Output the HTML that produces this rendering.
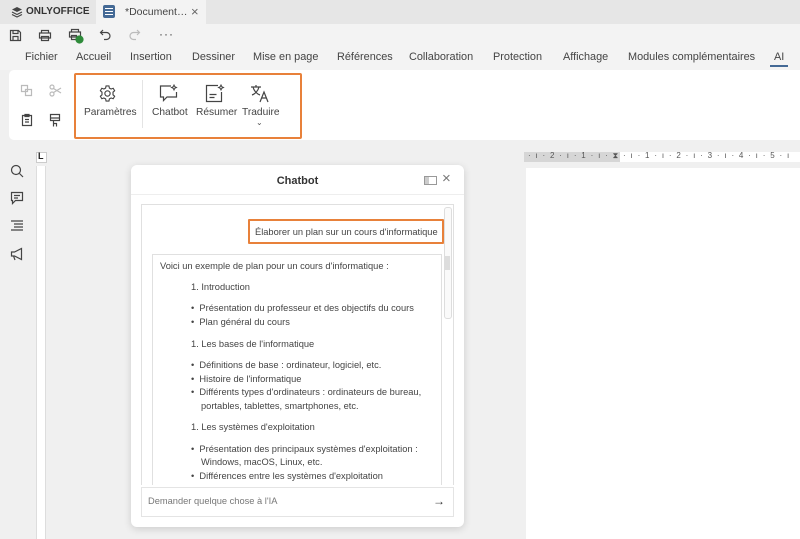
<!DOCTYPE html>
<html><head><meta charset="utf-8"><style>
*{margin:0;padding:0;box-sizing:border-box}
body{width:800px;height:539px;overflow:hidden;background:#f0f0f0;font-family:"Liberation Sans",Arial,sans-serif;position:relative;color:#333}
.a{position:absolute}
.t{position:absolute;white-space:nowrap}
svg{position:absolute;fill:none;stroke:#444;stroke-width:1.2}
.menu{font-size:10.9px;color:#444;top:51px}
.rl{font-size:10.2px;color:#444;top:107px}
.c{font-size:9.3px;color:#444;white-space:nowrap;position:absolute}
</style></head><body>
<div class="a" style="left:0;top:0;width:800px;height:24px;background:#e6e6e6"></div>
<div class="a" style="left:96px;top:0;width:110px;height:24px;background:#f3f3f3"></div>
<svg style="left:11px;top:6px" width="12" height="12" viewBox="0 0 12 12"><path d="M6 1L11 3.5 6 6 1 3.5Z" fill="#444" stroke="none"/><path d="M1 6L6 8.5 11 6M1 8.5L6 11 11 8.5" stroke="#444"/></svg>
<div class="t" style="left:26px;top:6px;font-size:10px;font-weight:bold;color:#333">ONLYOFFICE</div>
<div class="a" style="left:103px;top:5px;width:12px;height:13px;background:#446995;border-radius:2px"></div>
<div class="a" style="left:105px;top:8px;width:8px;height:1px;background:#fff;box-shadow:0 3px 0 #fff,0 6px 0 #fff"></div>
<div class="t" style="left:125px;top:6px;font-size:10.5px;color:#444">*Document…</div>
<div class="t" style="left:191px;top:4px;font-size:13px;color:#666">×</div>
<div class="a" style="left:0;top:24px;width:800px;height:46px;background:#f3f3f3"></div>
<svg style="left:9px;top:29px" width="13" height="13" viewBox="0 0 13 13"><path d="M1.5 1.5h8l2 2v8h-10z M4 1.5v3h5v-3 M4 11.5v-4h5v4"/></svg>
<svg style="left:38px;top:29px" width="14" height="13" viewBox="0 0 14 13"><path d="M3.5 4V1.5h7V4 M1.5 4h11v5h-11z M3.5 7.5h7v4h-7z"/></svg>
<svg style="left:68px;top:28px" width="16" height="16" viewBox="0 0 16 16"><path d="M3.5 4V1.5h7V4 M1.5 4h11v5h-11z M3.5 7.5h5v4h-5z"/><circle cx="11.5" cy="11.5" r="3.5" fill="#2e8b3a" stroke="#2e8b3a"/></svg>
<svg style="left:99px;top:29px" width="13" height="12" viewBox="0 0 13 12"><path d="M4 1L1.5 3.5 4 6 M1.5 3.5h6a3.5 3.5 0 010 7H5"/></svg>
<svg style="left:128px;top:29px;stroke:#bbb" width="13" height="12" viewBox="0 0 13 12"><path d="M9 1l2.5 2.5L9 6 M11.5 3.5h-6a3.5 3.5 0 000 7H8"/></svg>
<div class="t" style="left:159px;top:27px;font-size:12px;color:#444;letter-spacing:1px">···</div>
<div class="t menu" style="left:25px">Fichier</div>
<div class="t menu" style="left:76px">Accueil</div>
<div class="t menu" style="left:130px">Insertion</div>
<div class="t menu" style="left:192px">Dessiner</div>
<div class="t menu" style="left:253px">Mise en page</div>
<div class="t menu" style="left:337px">Références</div>
<div class="t menu" style="left:409px">Collaboration</div>
<div class="t menu" style="left:493px">Protection</div>
<div class="t menu" style="left:563px">Affichage</div>
<div class="t menu" style="left:628px">Modules complémentaires</div>
<div class="t menu" style="left:774px">AI</div>
<div class="a" style="left:770px;top:65px;width:18px;height:2px;background:#446995"></div>
<div class="a" style="left:9px;top:70px;width:800px;height:70px;background:#fff;border-radius:5px"></div>
<svg style="left:20px;top:84px;stroke:#bbb" width="13" height="13" viewBox="0 0 13 13"><path d="M1.5 1.5h6v6h-6z M5.5 5.5h6v6h-6z"/></svg>
<svg style="left:49px;top:84px;stroke:#bbb" width="13" height="13" viewBox="0 0 13 13"><circle cx="3" cy="3" r="2"/><circle cx="3" cy="10" r="2"/><path d="M4.5 4.5L12 9 M4.5 8.5L12 4"/></svg>
<svg style="left:21px;top:113px" width="12" height="14" viewBox="0 0 12 14"><path d="M1.5 2.5h9v10h-9z M4 1.5h4v2H4z M4 6.5h4 M4 9h4"/></svg>
<svg style="left:49px;top:113px" width="12" height="15" viewBox="0 0 12 15"><path d="M1.5 1.5h9v6h-9z M1.5 5h9 M4.5 7.5v3h3v3M4.5 10.5v3"/></svg>
<div class="a" style="left:74px;top:73px;width:228px;height:66px;border:2px solid #e8813a;border-radius:2px"></div>
<svg style="left:98px;top:84px" width="19" height="19" viewBox="0 0 20 20"><circle cx="10" cy="10" r="2.8"/><path d="M8.5 2h3l.5 2.3 1.8 1 2.2-.8 1.5 2.6-1.7 1.5v2.8l1.7 1.5-1.5 2.6-2.2-.8-1.8 1-.5 2.3h-3l-.5-2.3-1.8-1-2.2.8-1.5-2.6 1.7-1.5V8.6L2.5 7.1 4 4.5l2.2.8 1.8-1z"/></svg>
<div class="t rl" style="left:84px">Paramètres</div>
<div class="a" style="left:142px;top:80px;width:1px;height:48px;background:#e4e4e4"></div>
<svg style="left:159px;top:84px" width="20" height="19" viewBox="0 0 20 19"><path d="M12 2H1.5v11h3v3.5l3.5-3.5h9.5V8"/><path d="M15 1l.8 1.7 1.7.8-1.7.8-.8 1.7-.8-1.7-1.7-.8 1.7-.8z" stroke-width="1"/></svg>
<div class="t rl" style="left:152px">Chatbot</div>
<svg style="left:205px;top:84px" width="20" height="19" viewBox="0 0 20 19"><path d="M13 1.5H1.5v16h15V8 M4.5 10.5h7 M4.5 13.5h5"/><path d="M16 1l.8 1.7 1.7.8-1.7.8-.8 1.7-.8-1.7-1.7-.8 1.7-.8z" stroke-width="1"/></svg>
<div class="t rl" style="left:196px">Résumer</div>
<svg style="left:250px;top:84px" width="20" height="19" viewBox="0 0 20 19"><path d="M1 3h10 M6 1v2 M3 3c1 4 4 7 7 8 M9 3c-1 4-4 7-7 8 M10 18l4-10 4 10 M11.5 14h5"/></svg>
<div class="t rl" style="left:242px">Traduire</div>
<div class="t" style="left:256px;top:118px;font-size:8px;color:#555">⌄</div>
<svg style="left:10px;top:164px" width="14" height="14" viewBox="0 0 14 14"><circle cx="6" cy="6" r="4.5"/><path d="M9.5 9.5L13 13"/></svg>
<svg style="left:10px;top:191px" width="14" height="14" viewBox="0 0 14 14"><path d="M1.5 1.5h11v8h-7l-3 3v-3h-1z M4 4.5h6 M4 7h4"/></svg>
<svg style="left:10px;top:219px" width="14" height="14" viewBox="0 0 14 14"><path d="M1 2h12 M4 5h9 M4 8h9 M1 11h12"/></svg>
<svg style="left:10px;top:247px" width="14" height="14" viewBox="0 0 14 14"><path d="M1.5 5h3l7-3.5v11L4.5 9h-3z M3.5 9l1.5 4"/></svg>
<div class="a" style="left:36px;top:152px;width:11px;height:11px;background:#fff;border:1px solid #ccc"></div>
<div class="t" style="left:38px;top:151px;font-size:9px;font-weight:bold;color:#222">L</div>
<div class="a" style="left:36px;top:166px;width:10px;height:373px;background:#fff;border-left:1px solid #ddd;border-right:1px solid #ddd"></div>
<div class="a" style="left:524px;top:152px;width:276px;height:10px;background:#fff"></div>
<div class="a" style="left:524px;top:152px;width:96px;height:10px;background:#d6d6d6"></div>
<div class="t" style="left:528px;top:151px;font-size:8px;color:#555;letter-spacing:1.3px">· ı · 2 · ı · 1 · ı · ⧗ · ı · 1 · ı · 2 · ı · 3 · ı · 4 · ı · 5 · ı</div>
<div class="a" style="left:526px;top:168px;width:274px;height:371px;background:#fff"></div>
<div class="a" style="left:131px;top:165px;width:333px;height:362px;background:#fff;border-radius:6px;box-shadow:0 2px 8px rgba(0,0,0,.15)"></div>
<div class="t" style="left:131px;top:175px;width:333px;text-align:center;font-size:11px;font-weight:bold;color:#333">Chatbot</div>
<div class="a" style="left:424px;top:176px;width:13px;height:9px;border:1px solid #999"></div>
<div class="a" style="left:425px;top:177px;width:4px;height:7px;background:#ccc"></div>
<div class="t" style="left:442px;top:170px;font-size:15px;color:#777">×</div>
<div class="a" style="left:131px;top:194px;width:333px;height:1px;background:#eee"></div>
<div class="a" style="left:141px;top:204px;width:313px;height:281px;border:1px solid #e0e0e0;border-bottom:none"></div>
<div class="a" style="left:444px;top:207px;width:8px;height:112px;border:1px solid #ddd;border-radius:3px;background:#fafafa"></div>
<div class="a" style="left:248px;top:219px;width:196px;height:25px;border:2px solid #e8813a;border-radius:1px"></div>
<div class="c" style="left:255px;top:227px">Élaborer un plan sur un cours d'informatique</div>
<div class="a" style="left:152px;top:254px;width:290px;height:231px;border:1px solid #e0e0e0;border-bottom:none"></div>
<div class="a" style="left:445px;top:256px;width:5px;height:14px;background:#ddd"></div>
<div class="c" style="left:160px;top:261px">Voici un exemple de plan pour un cours d'informatique :</div>
<div class="c" style="left:191px;top:282px">1. Introduction</div>
<div class="c" style="left:191px;top:303px">•&nbsp; Présentation du professeur et des objectifs du cours</div>
<div class="c" style="left:191px;top:317px">•&nbsp; Plan général du cours</div>
<div class="c" style="left:191px;top:339px">1. Les bases de l'informatique</div>
<div class="c" style="left:191px;top:360px">•&nbsp; Définitions de base : ordinateur, logiciel, etc.</div>
<div class="c" style="left:191px;top:374px">•&nbsp; Histoire de l'informatique</div>
<div class="c" style="left:191px;top:387px">•&nbsp; Différents types d'ordinateurs : ordinateurs de bureau,</div>
<div class="c" style="left:201px;top:401px">portables, tablettes, smartphones, etc.</div>
<div class="c" style="left:191px;top:422px">1. Les systèmes d'exploitation</div>
<div class="c" style="left:191px;top:444px">•&nbsp; Présentation des principaux systèmes d'exploitation :</div>
<div class="c" style="left:201px;top:457px">Windows, macOS, Linux, etc.</div>
<div class="c" style="left:191px;top:471px">•&nbsp; Différences entre les systèmes d'exploitation</div>
<div class="a" style="left:141px;top:487px;width:313px;height:30px;border:1px solid #e4e4e4;background:#fff"></div>
<div class="c" style="left:148px;top:496px;color:#777">Demander quelque chose à l'IA</div>
<div class="t" style="left:433px;top:494px;font-size:12px;color:#333">→</div>
</body></html>
